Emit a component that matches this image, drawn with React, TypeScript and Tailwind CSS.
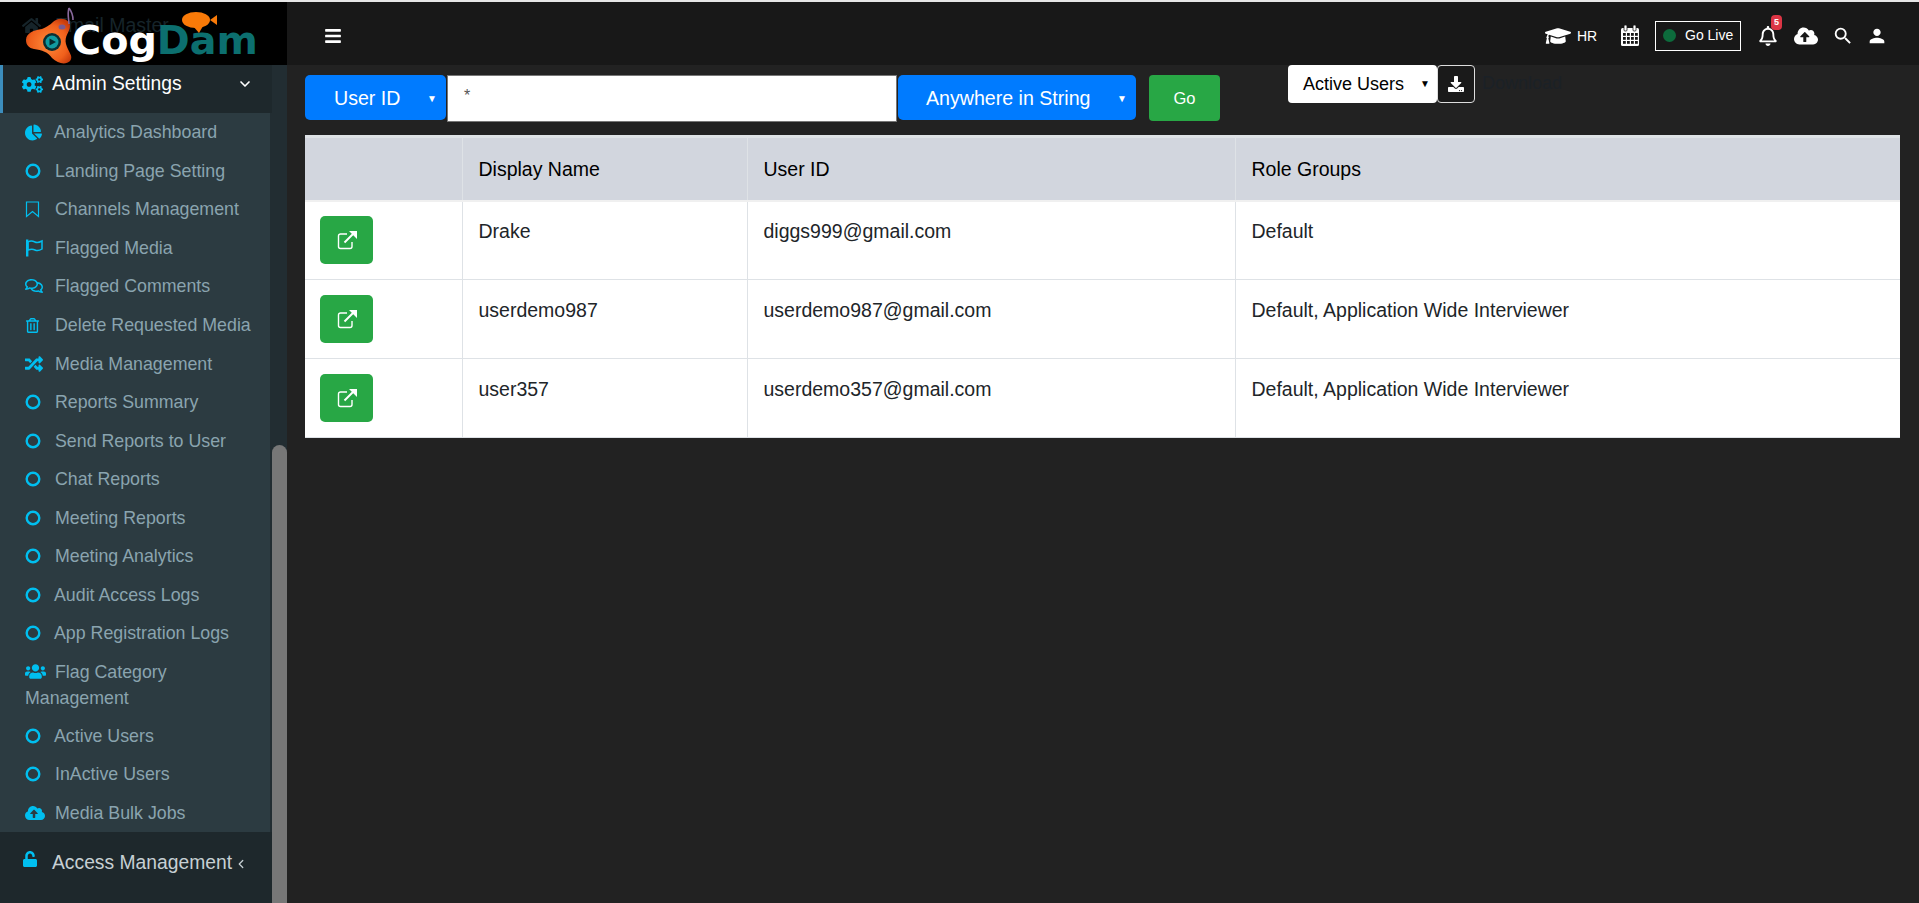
import React from "react";
import { FaChartPie, FaRegComments, FaRegTrashAlt, FaRandom, FaUsers, FaCloudUploadAlt, FaUnlock, FaCogs, FaGraduationCap, FaRegBell, FaDownload, FaHome, FaBars } from "react-icons/fa";
import { MdSearch, MdPerson } from "react-icons/md";
import { ChevronDown, ChevronLeft } from "lucide-react";

function Ring() {
  return (
    <svg width="16" height="16" viewBox="0 0 16 16" fill="none" stroke="currentColor" strokeWidth="2.4">
      <circle cx="8" cy="8" r="6.3" />
    </svg>
  );
}

function BookmarkO() {
  return (
    <svg width="15" height="17" viewBox="0 0 15 17" fill="none" stroke="currentColor" strokeWidth="1.2">
      <path d="M1.5 1 H13.5 V15.5 L7.5 10.5 L1.5 15.5 Z" />
    </svg>
  );
}

function FlagO() {
  return (
    <svg width="18" height="18" viewBox="0 0 18 18" fill="none" stroke="currentColor">
      <rect x="1" y="0.5" width="2.4" height="17" fill="currentColor" stroke="none" />
      <path d="M3 3 C6 1 8 2 10 3 C12 4 14 3.5 17 2 V10 C14 12 12 12 10 11 C8 10 6 10 3 11 Z" strokeWidth="1.5" />
    </svg>
  );
}

function ExternalO() {
  return (
    <svg width="20" height="20" viewBox="0 0 20 20" fill="none" stroke="currentColor" strokeWidth="1.4">
      <path d="M10 4 H3.5 A2 2 0 0 0 1.5 6 V16.5 A2 2 0 0 0 3.5 18.5 H13 A2 2 0 0 0 15 16.5 V12" />
      <path d="M7.5 12.5 L16 4" strokeWidth="2" />
      <path d="M12 1 H20 V9 Z" fill="currentColor" stroke="none" />
    </svg>
  );
}

function CalendarGrid() {
  const xs = [3, 7, 11, 15];
  const ys = [8, 12, 16];
  return (
    <svg width="20" height="21" viewBox="0 0 20 21">
      <rect x="1" y="3" width="18" height="18" rx="1.5" fill="#ffffff" />
      <rect x="4" y="0" width="3" height="6" rx="1" fill="#ffffff" stroke="#181818" strokeWidth="0.8" />
      <rect x="13" y="0" width="3" height="6" rx="1" fill="#ffffff" stroke="#181818" strokeWidth="0.8" />
      {ys.map((y) => xs.map((x) => <rect key={x + "-" + y} x={x} y={y} width="2.8" height="2.8" fill="#181818" />))}
    </svg>
  );
}

const items: { label: string; icon: React.ReactNode; wrap?: string; w?: string }[] = [
  { label: "Analytics Dashboard", icon: <FaChartPie size={17} />, w: "w-[29px]" },
  { label: "Landing Page Setting", icon: <Ring /> },
  { label: "Channels Management", icon: <BookmarkO /> },
  { label: "Flagged Media", icon: <FlagO /> },
  { label: "Flagged Comments", icon: <FaRegComments size={18} /> },
  { label: "Delete Requested Media", icon: <FaRegTrashAlt size={15} /> },
  { label: "Media Management", icon: <FaRandom size={18} /> },
  { label: "Reports Summary", icon: <Ring /> },
  { label: "Send Reports to User", icon: <Ring /> },
  { label: "Chat Reports", icon: <Ring /> },
  { label: "Meeting Reports", icon: <Ring /> },
  { label: "Meeting Analytics", icon: <Ring /> },
  { label: "Audit Access Logs", icon: <Ring />, w: "w-[29px]" },
  { label: "App Registration Logs", icon: <Ring />, w: "w-[29px]" },
  { label: "Flag Category", wrap: "Management", icon: <FaUsers size={21} /> },
  { label: "Active Users", icon: <Ring />, w: "w-[29px]" },
  { label: "InActive Users", icon: <Ring /> },
  { label: "Media Bulk Jobs", icon: <FaCloudUploadAlt size={20} /> },
];

const rows = [
  ["Drake", "diggs999@gmail.com", "Default"],
  ["userdemo987", "userdemo987@gmail.com", "Default, Application Wide Interviewer"],
  ["user357", "userdemo357@gmail.com", "Default, Application Wide Interviewer"],
];

function Logo() {
  return (
    <div className="relative h-[63px] bg-black overflow-hidden">
      <div className="absolute left-[22px] top-[9px] flex items-center gap-[14px] text-[#16242a] text-[19.5px]">
        <FaHome size={19} />
        <span>Email Master</span>
      </div>
      <svg className="absolute left-[20px] top-[-2px]" width="60" height="70" viewBox="0 0 60 70">
        <defs>
          <radialGradient id="lg" cx="50%" cy="55%" r="60%">
            <stop offset="0%" stopColor="#ff8a3a" />
            <stop offset="70%" stopColor="#f0601c" />
            <stop offset="100%" stopColor="#c93c0c" />
          </radialGradient>
        </defs>
        <path d="M6 40 C6 33 14 30 22 29 C30 26 32 22 36 20 C42 17 50 20 50 26 C50 32 44 36 46 44 C48 52 54 56 50 61 C46 65 38 64 32 58 C28 52 22 50 14 49 C9 48 6 45 6 40 Z" fill="url(#lg)" />
        <path d="M49 8 C47 14 49 20 49 24 M49 8 C52 12 53 17 53 20" stroke="#8a6a9e" strokeWidth="1.6" fill="none" />
        <ellipse cx="42" cy="27" rx="3.5" ry="2.5" fill="#7a5a90" />
        <circle cx="32" cy="42" r="9" fill="#0b2f33" />
        <circle cx="32" cy="42" r="6.5" fill="#119aa0" />
        <path d="M29.5 38.5 L36 42 L29.5 45.5 Z" fill="#08292d" />
      </svg>
      <span className="absolute left-[72px] top-[14px] font-['DejaVu_Sans',sans-serif] font-bold text-[39.7px] leading-[48px] text-white">
        Cog<span className="text-[#0c6f6f]">Dam</span>
      </span>
      <svg className="absolute left-[181px] top-[8px]" width="38" height="26" viewBox="0 0 38 26">
        <ellipse cx="15" cy="10" rx="14" ry="8" fill="#f97a08" />
        <path d="M12 16 L22 16 L18 23 Z" fill="#f97a08" />
        <path d="M29 10 L36 5 L36 15 Z" fill="#f97a08" />
      </svg>
    </div>
  );
}

function Sidebar() {
  return (
    <aside className="w-[287px] shrink-0 bg-[#222d32] flex flex-col">
      <Logo />
      <div className="flex-1 flex min-h-0">
        <div className="w-[272px] flex flex-col">
          <div className="h-[48px] bg-[#1e282c] border-l-[3px] border-[#3c8dbc] flex items-start pt-[6px] pl-[19px] pr-[19px] text-white text-[19.3px] leading-[26px]">
            <FaCogs size={21} className="text-[#00bff0] mt-[3px] mr-[9px]" />
            <span className="flex-1">Admin Settings</span>
            <ChevronDown size={16} strokeWidth={2.5} className="mt-[5px]" />
          </div>
          <ul className="w-[270px] bg-[#2c3b41] text-[#8aa4af] text-[17.8px] leading-[26px]">
            {items.map((it) => (
              <li key={it.label} className={it.wrap ? "pl-[25px] pt-[6px] pb-[6px]" : "pl-[25px] h-[38.55px] flex items-center"}>
                {it.wrap ? (
                  <>
                    <div className="flex items-center">
                      <span className="w-[30px] text-[#00bff0] shrink-0">{it.icon}</span>
                      <span>{it.label}</span>
                    </div>
                    <div>{it.wrap}</div>
                  </>
                ) : (
                  <>
                    <span className={(it.w ?? "w-[30px]") + " text-[#00bff0] shrink-0"}>{it.icon}</span>
                    <span>{it.label}</span>
                  </>
                )}
              </li>
            ))}
          </ul>
          <div className="flex-1 bg-[#1e282c] flex pt-[18px] pl-[22px] text-[#c7d0d4] text-[19.3px] leading-[26px]">
            <FaUnlock size={16} className="text-[#00bff0] mt-[1px] mr-[14px]" />
            <span>Access Management</span>
            <ChevronLeft size={14} strokeWidth={2.2} className="mt-[7px] ml-[2px]" />
          </div>
        </div>
        <div className="w-[15px] bg-[#222d32] flex flex-col justify-end">
          <div className="h-[458px] w-[15px] rounded-t-[8px] bg-[#777777]" />
        </div>
      </div>
    </aside>
  );
}

function Header() {
  return (
    <header className="h-[63px] bg-[#181818] flex items-center text-white pl-[37px] pr-[31px] pt-[4px] shrink-0">
      <FaBars size={18} />
      <div className="ml-auto flex items-center">
        <FaGraduationCap size={26} />
        <span className="ml-[6px] text-[14px] w-[20px] mt-[2px]">HR</span>
        <span className="ml-[23px]">
          <CalendarGrid />
        </span>
        <div className="ml-[15px] w-[86px] h-[30px] border border-white flex items-center pl-[7px] text-[14px]">
          <span className="w-[13px] h-[13px] rounded-full bg-[#0d6b3c] mr-[9px]" />
          Go Live
        </div>
        <div className="relative ml-[17px]">
          <FaRegBell size={20} />
          <span className="absolute -top-[11px] left-[13px] w-[11px] h-[15px] rounded-[4px] bg-[#dc3545] text-[9px] font-bold leading-[15px] text-center">5</span>
        </div>
        <FaCloudUploadAlt size={24} className="ml-[16px]" />
        <MdSearch size={22} className="ml-[14px]" />
        <MdPerson size={22} className="ml-[12px]" />
      </div>
    </header>
  );
}

function Caret() {
  return <span className="text-[10px] leading-none">▼</span>;
}

function Toolbar() {
  return (
    <div className="flex items-start pl-[18px] shrink-0 h-[70px]">
      <div className="mt-[10px] flex items-start text-white text-[19.6px]">
        <div className="w-[141px] h-[45px] pt-[2px] bg-[#007bff] rounded-[5px] flex items-center pl-[29px] pr-[9px] justify-between">
          <span>User ID</span>
          <Caret />
        </div>
        <div className="w-[450px] h-[47px] ml-[1px] bg-white border border-[#767676] text-[#555] text-[16px] pl-[16px] pt-[8px]">*</div>
        <div className="w-[238px] h-[45px] pt-[2px] ml-[1px] bg-[#007bff] rounded-[5px] flex items-center pl-[28px] pr-[9px] justify-between">
          <span>Anywhere in String</span>
          <Caret />
        </div>
        <div className="w-[71px] h-[46px] ml-[13px] bg-[#28a745] rounded-[4px] flex items-center justify-center text-[16.5px]">Go</div>
      </div>
      <div className="ml-[68px] flex items-start">
        <div className="w-[149px] h-[38px] bg-white rounded-[4px] flex items-center pl-[15px] pr-[7px] justify-between text-black text-[18px]">
          <span>Active Users</span>
          <Caret />
        </div>
        <div className="w-[38px] h-[38px] border border-[#ddd] rounded-[4px] bg-[#1a1a1a] text-white flex items-center justify-center">
          <FaDownload size={16} />
        </div>
        <span className="ml-[7px] mt-[5px] text-[#1b2127] text-[18px]">Download</span>
      </div>
    </div>
  );
}

function Table() {
  return (
    <div className="ml-[18px] mr-[19px] bg-white rounded-t-[3px] text-[19.5px] text-[#212529]">
      <table className="w-full border-collapse table-fixed">
        <colgroup>
          <col className="w-[157px]" />
          <col className="w-[285px]" />
          <col className="w-[488px]" />
          <col />
        </colgroup>
        <thead>
          <tr className="bg-[#d2d6de] text-black border-t-[3px] border-[#dee2e6] border-b-[2px] border-b-[#f0f0f0] h-[64px]">
            <th className="border-r border-[#dee2e6]" />
            <th className="border-r border-[#dee2e6] text-left font-normal pl-[16px] pt-[2px]">Display Name</th>
            <th className="border-r border-[#dee2e6] text-left font-normal pl-[16px] pt-[2px]">User ID</th>
            <th className="text-left font-normal pl-[16px] pt-[2px]">Role Groups</th>
          </tr>
        </thead>
        <tbody>
          {rows.map((r) => (
            <tr key={r[0]} className="border-b border-[#dee2e6] h-[79px]">
              <td className="border-r border-[#dee2e6] pl-[15px] align-middle">
                <div className="w-[53px] h-[48px] bg-[#28a745] rounded-[5px] flex items-center justify-center text-white">
                  <ExternalO />
                </div>
              </td>
              {r.map((c, i) => (
                <td key={i} className={(i < 2 ? "border-r border-[#dee2e6] " : "") + "pl-[16px] pt-[16.5px] align-top leading-[26px]"}>{c}</td>
              ))}
            </tr>
          ))}
        </tbody>
      </table>
    </div>
  );
}

export default function App() {
  return (
    <div className="w-[1919px] h-[903px] overflow-hidden bg-[#222222] font-['Liberation_Sans',sans-serif] flex flex-col">
      <div className="h-[2px] bg-[#e6e6e6] shrink-0" />
      <div className="flex-1 flex min-h-0">
        <Sidebar />
        <main className="flex-1 flex flex-col min-w-0">
          <Header />
          <Toolbar />
          <Table />
        </main>
      </div>
    </div>
  );
}
